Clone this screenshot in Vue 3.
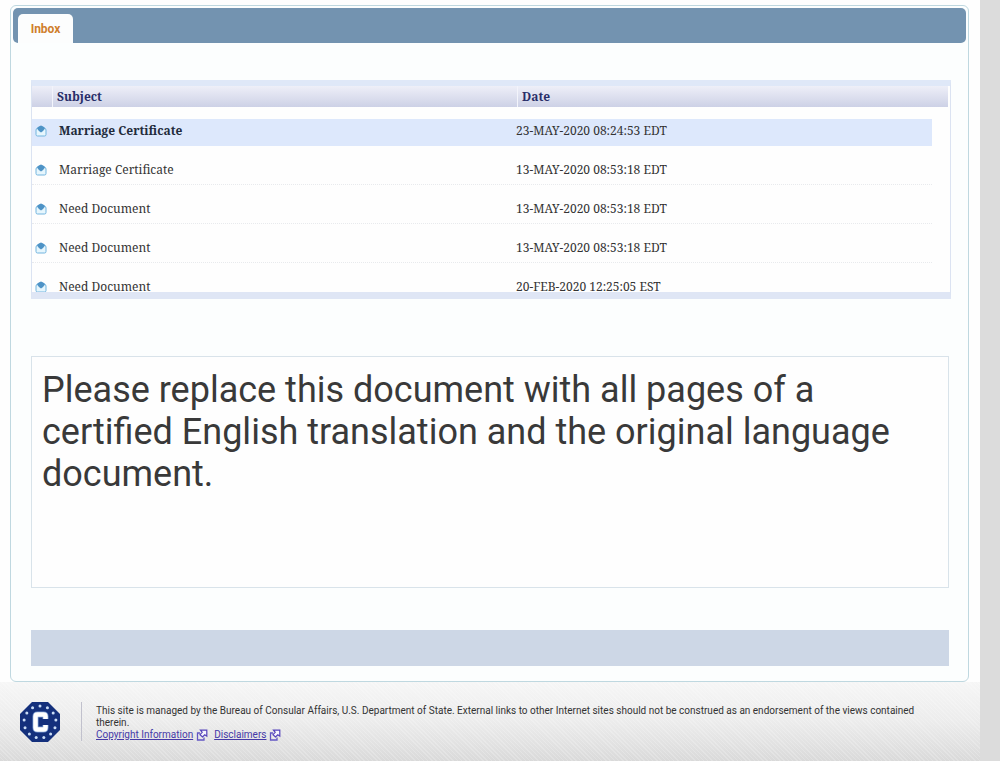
<script setup>
const messages = [
  { subject: 'Marriage Certificate', date: '23-MAY-2020 08:24:53 EDT', selected: true },
  { subject: 'Marriage Certificate', date: '13-MAY-2020 08:53:18 EDT' },
  { subject: 'Need Document', date: '13-MAY-2020 08:53:18 EDT' },
  { subject: 'Need Document', date: '13-MAY-2020 08:53:18 EDT' },
  { subject: 'Need Document', date: '20-FEB-2020 12:25:05 EST' },
]
const links = ['Copyright Information', 'Disclaimers']
const stars = Array.from({ length: 13 }, (_, i) => {
  const a = (i * 2 * Math.PI) / 13
  return { x: 20 + 16 * Math.sin(a), y: 20 - 16 * Math.cos(a) }
})
</script>

<template>
  <div class="page">
    <main class="panel">
      <nav class="tabs">
        <button type="button" class="tab">Inbox</button>
      </nav>

      <div class="list">
        <table>
          <thead>
            <tr>
              <th scope="col" aria-label="Status"></th>
              <th scope="col">Subject</th>
              <th scope="col">Date</th>
            </tr>
          </thead>
          <tbody>
            <tr v-for="(m, i) in messages" :key="i" :class="{ selected: m.selected }">
              <td class="status">
                <svg viewBox="0 0 12 12" width="12" height="12" aria-hidden="true">
                  <path d="M3 2.500Q1 3.500 1 5v4.500Q1 11 2.500 11h7q1.500 0 1.500-1.500V5q0-1.500-2-2.500Z" fill="#e6f6fd" stroke="#72b4de" />
                  <path d="M6 .5Q8.500.8 10 3.500 8.500 6 6 7.500 3.500 6 2 3.500 3.500.8 6 .5Z" fill="#4e93c6" />
                </svg>
              </td>
              <td class="subject">{{ m.subject }}</td>
              <td>{{ m.date }}</td>
            </tr>
          </tbody>
        </table>
      </div>

      <article class="message">
        Please replace this document with all pages of a certified English translation and the original language document.
      </article>
      <div class="actions"></div>
    </main>

    <footer>
      <svg class="seal" viewBox="0 0 40 40" width="40" height="40" role="img" aria-label="Consular Affairs">
        <path d="M12 0h16l12 12v16L28 40H12L0 28V12Z" fill="#14307c" />
        <circle v-for="(s, i) in stars" :key="i" :cx="s.x" :cy="s.y" r="1.500" fill="#c9dcf5" />
        <path d="M25.500 17v-2.500q0-2-2-2h-6q-2 0-2 2v11q0 2 2 2h6q2 0 2-2V23" fill="none" stroke="#7595cc" stroke-width="6" />
        <path d="M25.500 17v-2.500q0-2-2-2h-6q-2 0-2 2v11q0 2 2 2h6q2 0 2-2V23" fill="none" stroke="#fff" stroke-width="4.500" />
      </svg>
      <div class="legal">
        <p>This site is managed by the Bureau of Consular Affairs, U.S. Department of State. External links to other Internet sites should not be construed as an endorsement of the views contained therein.</p>
        <div class="links">
          <a v-for="l in links" :key="l" href="#"><span>{{ l }}</span>
            <svg viewBox="0 0 12 12" width="12" height="12" aria-hidden="true">
              <path d="M4 4H1.500v7H8V8.500" fill="none" stroke="#6357c4" stroke-width="1.300" />
              <path d="M4.500 1.200h6.300v6L8.800 5.800 6.500 8 4 5.700 6.200 3.300Z" fill="#f6f5fd" stroke="#5443bb" stroke-width="1.200" />
            </svg>
          </a>
        </div>
      </div>
    </footer>
  </div>
</template>

<style>
body { background: #dcdcdc; }
</style>

<style scoped>
* { box-sizing: border-box; }
.page {
  min-height: 100vh;
  margin-right: 20px;
  padding-top: 5px;
  display: flex;
  flex-direction: column;
  background: #fefefe;
  font-family: Roboto, sans-serif;
}
.panel {
  margin: 0 11px 0 10px;
  padding: 2px 2px 15px;
  border: 1px solid #bfd8e0;
  border-radius: 6px;
  background: #fcfefe;
}
.tabs {
  height: 35px;
  padding: 6px 5px 0;
  display: flex;
  border-radius: 5px;
  background: #7393b0;
}
.tab {
  width: 55px;
  padding: 0;
  border: 0;
  border-radius: 5px 5px 0 0;
  background: #fcfdfd;
  color: #cf7e2c;
  font: bold 12px Roboto, sans-serif;
}
.list {
  height: 219px;
  margin: 37px 15px 0 18px;
  overflow: hidden;
  border: 1px solid #dbe3f2;
  border-width: 6px 1px 7px;
  border-top-color: #dfe8f8;
  border-bottom-color: #dfe6f5;
  background: #fefefe;
  font: 12px/24px "Noto Serif", "DejaVu Serif", serif;
  color: #333;
}
table, thead, tbody { display: block; }
thead { padding-right: 2px; }
tr { display: grid; grid-template-columns: 20px 1fr 416px; }
thead tr {
  height: 21px;
  grid-template-columns: 20px 1fr 431px;
  background: linear-gradient(#eeeff8, #cdd1e6);
}
th {
  padding: 0 4px;
  border-left: 1px solid #f3f4fb;
  text-align: left;
  line-height: 21px;
  color: #282e68;
}
th:first-child { border: 0; }
tbody {
  padding: 12px 18px 0 0;
  display: grid;
  row-gap: 12px;
}
tbody tr { height: 27px; border-bottom: 1px dotted #e8eaed; }
.selected { background: #dde8fc; border-color: #dde8fc; }
td { padding: 0; }
.status { padding: 6px 0 0 3px; line-height: 0; }
.subject { padding-left: 7px; }
.selected .subject { font-weight: bold; color: #222b3b; }
.message {
  min-height: 232px;
  margin: 57px 17px 0 18px;
  padding: 12px 10px;
  border: 1px solid #d9e3ea;
  background: #fefefe;
  color: #393939;
  font-size: 36px;
  line-height: 42px;
}
.actions { height: 36px; margin: 42px 17px 0 18px; background: #cdd7e6; }
footer {
  flex: 1;
  padding: 20px 40px 20px 20px;
  display: flex;
  align-items: flex-start;
  background:
    repeating-linear-gradient(45deg, rgba(255, 255, 255, 0.200) 0 1px, transparent 1px 3px),
    linear-gradient(#f6f6f6, #ececec 50%, #d9d9d9);
}
.seal { flex: none; }
.legal {
  margin-left: 21px;
  padding: 3px 0 0 14px;
  border-left: 1px solid #c1c1cd;
  font-size: 10px;
  line-height: 12px;
  color: #333;
}
p { margin: 0; }
.links { display: flex; gap: 6px; }
a { display: flex; gap: 3px; color: #4539a8; text-decoration: none; }
a span { text-decoration: underline; }
</style>
